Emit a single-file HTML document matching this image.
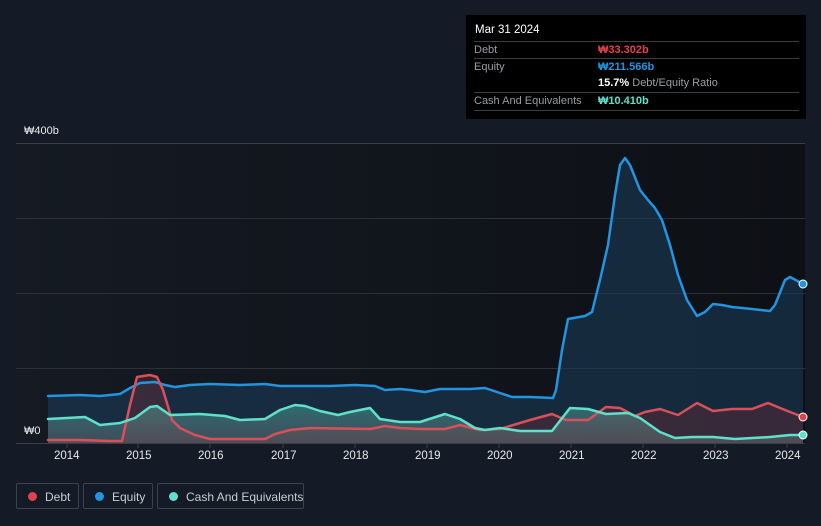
<!DOCTYPE html>
<html><head><meta charset="utf-8"><style>
html,body{margin:0;padding:0;background:#151b26;width:821px;height:526px;overflow:hidden;font-family:"Liberation Sans",sans-serif}
.tip{position:absolute;left:466px;top:15px;width:340px;height:104px;background:#000;color:#fff;font-size:11px}
.row{position:absolute;left:8px;width:325px;border-top:1px solid #3a3d42;height:17px;line-height:17px}
.lab{color:#9a9da3;position:absolute;left:0}
.val{position:absolute;left:124px;font-weight:bold;white-space:nowrap}
.leg{position:absolute;top:483px;height:26px;border:1px solid #3d434d;border-radius:2px;color:#c8ccd2;font-size:12px;line-height:26px;box-sizing:border-box;white-space:nowrap}
.dot{position:absolute;left:11px;top:8px;width:9px;height:9px;border-radius:50%}
.ax{position:absolute;top:450px;color:#e6e8eb;font-size:11.5px}
</style></head><body>
<svg width="821" height="526" style="position:absolute;left:0;top:0">
<defs>
<linearGradient id="bg" x1="0" x2="1"><stop offset="0" stop-color="#151a23"/><stop offset="1" stop-color="#0d1015"/></linearGradient>
<linearGradient id="cf" x1="0" y1="0" x2="0" y2="1"><stop offset="0" stop-color="#4fb8ad" stop-opacity=".45"/><stop offset="1" stop-color="#6e7378" stop-opacity=".45"/></linearGradient>
</defs>
<rect x="16" y="143" width="789" height="300" fill="url(#bg)"/>
<g stroke="#2c3038" stroke-width="1"><line x1="16" y1="143.5" x2="805" y2="143.5" stroke="#3a3e45"/><line x1="16" y1="218.5" x2="805" y2="218.5"/><line x1="16" y1="293.5" x2="805" y2="293.5"/><line x1="16" y1="368.5" x2="805" y2="368.5"/><line x1="16" y1="443.5" x2="805" y2="443.5" stroke="#3a3e45"/></g>
<g stroke="#3a3e45"><line x1="67" y1="443" x2="67" y2="448"/><line x1="138" y1="443" x2="138" y2="448"/><line x1="210" y1="443" x2="210" y2="448"/><line x1="283" y1="443" x2="283" y2="448"/><line x1="355" y1="443" x2="355" y2="448"/><line x1="427" y1="443" x2="427" y2="448"/><line x1="499" y1="443" x2="499" y2="448"/><line x1="571" y1="443" x2="571" y2="448"/><line x1="643" y1="443" x2="643" y2="448"/><line x1="715" y1="443" x2="715" y2="448"/><line x1="787" y1="443" x2="787" y2="448"/></g>
<g stroke-linejoin="round" stroke-linecap="round">
<polygon fill="#1a3a57" fill-opacity=".6" points="48,443 48,396 80,395 100,396 120,394 130,388 140,383 155,382 165,385 175,387 190,385 210,384 240,385 265,384 280,386 300,386 330,386 355,385 375,386 385,390 400,389 410,390 425,392 440,389 470,389 485,388 500,393 512,397 530,397 553,398 556,390 562,350 568,319 585,316 592,312 600,280 608,245 615,195 620,165 625,158 630,165 640,190 648,200 655,208 662,220 670,245 678,275 687,300 697,316 705,312 713,304 722,305 732,307 752,309 770,311 775,305 785,280 790,277 803,284 803,443"/>
<polygon fill="#6b2a35" fill-opacity=".4" points="48,443 48,440 80,440 110,441 122,441 130,405 137,377 150,375 157,377 163,390 172,420 180,428 195,435 210,439 265,439 275,434 290,430 310,428 370,429 385,426 400,428 420,429 445,429 460,425 480,430 500,429 530,420 552,414 566,420 588,420 606,407 620,408 635,416 645,412 660,409 678,415 697,403 713,411 732,409 752,409 768,403 785,410 803,417 803,443"/>
<polygon fill="url(#cf)" points="48,443 48,419 85,417 100,425 120,423 135,418 150,407 157,406 170,415 200,414 225,416 240,420 265,419 280,410 295,405 305,406 320,411 338,415 350,412 370,408 380,419 400,422 420,422 445,414 460,419 475,428 485,430 500,428 520,431 552,431 570,408 588,409 606,414 628,413 640,418 660,432 675,438 693,437 713,437 735,439 770,437 790,435 803,435 803,443"/>
<polyline fill="none" stroke="#2394df" stroke-width="2.5" points="48,396 80,395 100,396 120,394 130,388 140,383 155,382 165,385 175,387 190,385 210,384 240,385 265,384 280,386 300,386 330,386 355,385 375,386 385,390 400,389 410,390 425,392 440,389 470,389 485,388 500,393 512,397 530,397 553,398 556,390 562,350 568,319 585,316 592,312 600,280 608,245 615,195 620,165 625,158 630,165 640,190 648,200 655,208 662,220 670,245 678,275 687,300 697,316 705,312 713,304 722,305 732,307 752,309 770,311 775,305 785,280 790,277 803,284"/>
<polyline fill="none" stroke="#d8505a" stroke-width="2.5" points="48,440 80,440 110,441 122,441 130,405 137,377 150,375 157,377 163,390 172,420 180,428 195,435 210,439 265,439 275,434 290,430 310,428 370,429 385,426 400,428 420,429 445,429 460,425 480,430 500,429 530,420 552,414 566,420 588,420 606,407 620,408 635,416 645,412 660,409 678,415 697,403 713,411 732,409 752,409 768,403 785,410 803,417"/>
<polyline fill="none" stroke="#5fe0cb" stroke-width="2.5" points="48,419 85,417 100,425 120,423 135,418 150,407 157,406 170,415 200,414 225,416 240,420 265,419 280,410 295,405 305,406 320,411 338,415 350,412 370,408 380,419 400,422 420,422 445,414 460,419 475,428 485,430 500,428 520,431 552,431 570,408 588,409 606,414 628,413 640,418 660,432 675,438 693,437 713,437 735,439 770,437 790,435 803,435"/>
</g>
<circle cx="803" cy="284" r="4" fill="#2394df" stroke="#fff" stroke-width="1"/>
<circle cx="803" cy="417" r="4" fill="#e0434d" stroke="#fff" stroke-width="1"/>
<circle cx="803" cy="435" r="4" fill="#5fe0cb" stroke="#fff" stroke-width="1"/>
</svg>
<div style="position:absolute;left:24px;top:125px;color:#e6e8eb;font-size:11px">₩400b</div>
<div style="position:absolute;left:24px;top:425px;color:#e6e8eb;font-size:11px">₩0</div>
<div class="ax" style="left:54px">2014</div><div class="ax" style="left:126px">2015</div><div class="ax" style="left:198px">2016</div><div class="ax" style="left:271px">2017</div><div class="ax" style="left:343px">2018</div><div class="ax" style="left:415px">2019</div><div class="ax" style="left:487px">2020</div><div class="ax" style="left:559px">2021</div><div class="ax" style="left:631px">2022</div><div class="ax" style="left:703px">2023</div><div class="ax" style="left:775px">2024</div>
<div class="tip">
<div style="position:absolute;left:9px;top:9px;font-size:11.5px">Mar 31 2024</div>
<div class="row" style="top:26px"><span class="lab">Debt</span><span class="val" style="color:#e0434d">₩33.302b</span></div>
<div class="row" style="top:43px"><span class="lab">Equity</span><span class="val" style="color:#2394df">₩211.566b</span></div>
<div class="row" style="top:60px;border-top:none"><span class="val" style="color:#fff">15.7% <span style="color:#9a9da3;font-weight:normal">Debt/Equity Ratio</span></span></div>
<div class="row" style="top:77px"><span class="lab">Cash And Equivalents</span><span class="val" style="color:#5fe0cb">₩10.410b</span></div>
<div class="row" style="top:95px;height:0"></div>
</div>
<div class="leg" style="left:16px;width:63px"><span class="dot" style="background:#e0434d"></span><span style="position:absolute;left:28px">Debt</span></div>
<div class="leg" style="left:83px;width:70px"><span class="dot" style="background:#2394df"></span><span style="position:absolute;left:28px">Equity</span></div>
<div class="leg" style="left:157px;width:147px"><span class="dot" style="background:#5fe0cb"></span><span style="position:absolute;left:28px">Cash And Equivalents</span></div>
</body></html>
